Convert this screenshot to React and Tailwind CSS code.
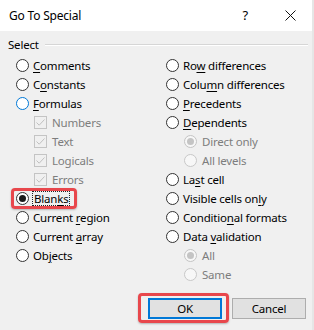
import React from "react";

const font = { fontFamily: '"Noto Sans", "Segoe UI", Arial, sans-serif' };

function Radio({ state = "normal" }) {
  if (state === "checked") {
    return (
      <span className="flex h-[13px] w-[13px] shrink-0 items-center justify-center rounded-full border border-[#333333] bg-white">
        <span className="h-[7px] w-[7px] rounded-full bg-[#1a1a1a]" />
      </span>
    );
  }
  if (state === "hover") {
    return <span className="h-[13px] w-[13px] shrink-0 rounded-full border border-[#0078d7] bg-white" />;
  }
  if (state === "disabledChecked") {
    return (
      <span className="flex h-[13px] w-[13px] shrink-0 items-center justify-center rounded-full border border-[#c4c4c4] bg-[#f7f7f7]">
        <span className="h-[7px] w-[7px] rounded-full bg-[#c4c4c4]" />
      </span>
    );
  }
  if (state === "disabled") {
    return <span className="h-[13px] w-[13px] shrink-0 rounded-full border border-[#c8c8c8] bg-[#f7f7f7]" />;
  }
  return <span className="h-[13px] w-[13px] shrink-0 rounded-full border border-[#333333] bg-white" />;
}

function Check() {
  return (
    <span className="flex h-[13px] w-[13px] shrink-0 items-center justify-center border border-[#c4c4c4] bg-[#f0f0f0]">
      <svg width="11" height="11" viewBox="0 0 11 11">
        <path d="M1.5 5.5 L4.2 8.2 L9.5 2.5" fill="none" stroke="#c0c0c0" strokeWidth="1" />
      </svg>
    </span>
  );
}

function Label({ text, u, disabled }) {
  const cls = disabled ? "text-[#7d7d7d]" : "text-black";
  if (u === undefined) return <span className={cls}>{text}</span>;
  return (
    <span className={cls}>
      {text.slice(0, u)}
      <span className="underline underline-offset-2">{text[u]}</span>
      {text.slice(u + 1)}
    </span>
  );
}

function Row({ children, indent }) {
  return (
    <div className={`flex h-[19px] items-center ${indent ? "gap-[5px] pl-[18px]" : "gap-[4px]"}`}>
      {children}
    </div>
  );
}

export default function App() {
  return (
    <div
      className="relative h-[330px] w-[314px] overflow-hidden bg-[#f0f0f0] text-[11.5px] leading-none tracking-[-0.2px]"
      style={font}
    >
      {/* Title bar */}
      <div className="flex h-[31px] items-center bg-white pl-[9px] pr-[18px]">
        <span className="text-[12px] text-black">Go To Special</span>
        <span className="ml-auto mr-[37px] text-[13px] text-black">?</span>
        <svg width="11" height="11" viewBox="0 0 11 11">
          <path d="M0.5 0.5 L10.5 10.5 M10.5 0.5 L0.5 10.5" stroke="#111" strokeWidth="1" />
        </svg>
      </div>

      {/* Group header */}
      <div className="mt-[4px] flex h-[20px] items-center pl-[8px] pr-[6px]">
        <span className="text-black">Select</span>
        <div className="ml-[6px] flex-1 border-t border-b border-t-[#d6d6d6] border-b-white" />
      </div>

      {/* Options */}
      <div className="mt-[1px] grid grid-cols-[150px_1fr] pl-[16px]">
        <div className="flex flex-col">
          <Row><Radio /><Label text="Comments" u={0} /></Row>
          <Row><Radio /><Label text="Constants" u={1} /></Row>
          <Row><Radio state="hover" /><Label text="Formulas" u={0} /></Row>
          <Row indent><Check /><Label text="Numbers" disabled /></Row>
          <Row indent><Check /><Label text="Text" disabled /></Row>
          <Row indent><Check /><Label text="Logicals" disabled /></Row>
          <Row indent><Check /><Label text="Errors" disabled /></Row>
          <Row>
            <Radio state="checked" />
            <span className="-ml-[1px] border border-dotted border-[#222] px-[1px] py-[1px]">
              <Label text="Blanks" u={4} />
            </span>
          </Row>
          <Row><Radio /><Label text="Current region" u={8} /></Row>
          <Row><Radio /><Label text="Current array" u={8} /></Row>
          <Row><Radio /><Label text="Objects" u={2} /></Row>
        </div>
        <div className="flex flex-col">
          <Row><Radio /><Label text="Row differences" u={2} /></Row>
          <Row><Radio /><Label text="Column differences" u={4} /></Row>
          <Row><Radio /><Label text="Precedents" u={0} /></Row>
          <Row><Radio /><Label text="Dependents" u={0} /></Row>
          <Row indent><Radio state="disabledChecked" /><Label text="Direct only" disabled /></Row>
          <Row indent><Radio state="disabled" /><Label text="All levels" disabled /></Row>
          <Row><Radio /><Label text="Last cell" u={2} /></Row>
          <Row><Radio /><Label text="Visible cells only" u={16} /></Row>
          <Row><Radio /><Label text="Conditional formats" u={8} /></Row>
          <Row><Radio /><Label text="Data validation" u={5} /></Row>
          <Row indent><Radio state="disabledChecked" /><Label text="All" disabled /></Row>
          <Row indent><Radio state="disabled" /><Label text="Same" disabled /></Row>
        </div>
      </div>

      {/* Buttons */}
      <div className="mt-[14px] flex justify-end gap-[10px] pr-[8px]">
        <button className="flex h-[21px] w-[74px] items-center justify-center border-2 border-[#0078d7] bg-[#e1e1e1] text-black">
          OK
        </button>
        <button className="flex h-[21px] w-[74px] items-center justify-center border border-[#adadad] bg-[#e1e1e1] text-black">
          Cancel
        </button>
      </div>

      {/* Right window edge */}
      <div className="absolute right-0 top-0 h-full w-[2px] bg-[#e6e6e6]" />

      {/* Annotation highlights */}
      <div className="absolute left-[11px] top-[188px] h-[21px] w-[66px] rounded-[4px] border-[3px] border-[#e8474c] shadow-[0_1px_2px_rgba(0,0,0,0.25)]" />
      <div className="absolute left-[138px] top-[293px] h-[30px] w-[91px] rounded-[4px] border-[3px] border-[#e8474c] shadow-[0_1px_2px_rgba(0,0,0,0.25)]" />
    </div>
  );
}
